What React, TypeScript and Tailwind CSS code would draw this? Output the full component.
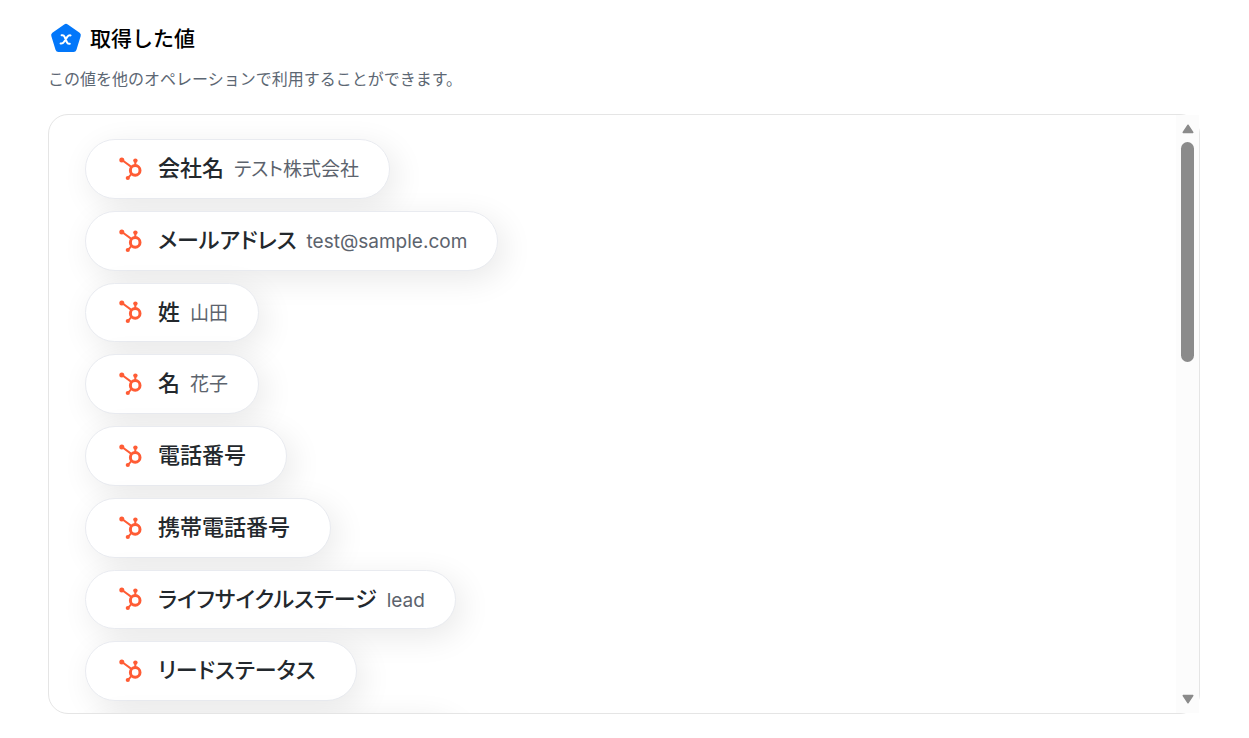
type Field = {
    label: string;
    value: string;
};

const fields: Field[] = [
    { label: "会社名", value: "テスト株式会社" },
    { label: "メールアドレス", value: "test@sample.com" },
    { label: "姓", value: "山田" },
    { label: "名", value: "花子" },
    { label: "電話番号", value: "" },
    { label: "携帯電話番号", value: "" },
    { label: "ライフサイクルステージ", value: "lead" },
    { label: "リードステータス", value: "" },
];

const ValueIcon = () => (
    <svg viewBox="0 1 32 32" className="size-8 shrink-0" aria-hidden="true">
        <path
            d="M14.2 2.5a3 3 0 0 1 3.6 0l11.8 8.3a3 3 0 0 1 1.1 3.3l-4.3 13.8a3 3 0 0 1-2.9 2.1h-15a3 3 0 0 1-2.9-2.1L1.3 14.1a3 3 0 0 1 1.1-3.3z"
            fill="#0277fa"
        />
        <path
            d="M11.6 13.2h.9c1 0 1.6.5 2.1 1.6l2.2 5.2c.5 1.2 1.1 1.8 2.1 1.8h.9M20.6 13.4c-1.6-.3-2.6.5-3.5 1.7l-3 4.6c-.9 1.4-1.9 2.2-3.5 1.8"
            fill="none"
            stroke="#fff"
            strokeWidth="2"
            strokeLinecap="round"
        />
    </svg>
);

const HubSpotIcon = () => (
    <svg viewBox="0 0 24 24" className="size-6 shrink-0" aria-hidden="true">
        <g fill="none" stroke="#ff5c35">
            <path d="M4 3l10 7.4M17.3 4v5M13.6 16.8l-3.6 4" strokeWidth="2" />
            <circle cx="17.2" cy="13.4" r="4.8" strokeWidth="3" />
        </g>
        <g fill="#ff5c35">
            <circle cx="3.8" cy="3" r="2.5" />
            <circle cx="17.4" cy="3.6" r="2.2" />
            <circle cx="9.8" cy="21" r="2.1" />
        </g>
    </svg>
);

const FieldChip = ({ label, value }: Field) => (
    <li className="flex items-center gap-4 rounded-full border border-[#e9ebf0] bg-white py-[11px] pr-[30px] pl-8 shadow-[6px_8px_32px_rgba(0,0,0,0.09)]">
        <HubSpotIcon />
        <div className="flex items-baseline gap-[10px]">
            <span className="text-[22px] leading-relaxed font-medium text-[#23282d]">{label}</span>
            <span className="text-[19px] leading-6 text-[#5c636d]">{value}</span>
        </div>
    </li>
);

const ScrollBar = () => (
    <div className="flex w-[23px] shrink-0 flex-col items-center bg-[#fcfcfc] py-[9px]" aria-hidden="true">
        <svg viewBox="0 0 12 10" className="h-[10px] w-3">
            <path d="M6 1.2L10.8 8.5H1.2z" fill="#8b8b8b" stroke="#8b8b8b" strokeWidth="1.4" strokeLinejoin="round" />
        </svg>
        <div className="mt-2 h-[220px] w-[13px] rounded-full bg-[#8b8b8b]" />
        <svg viewBox="0 0 12 10" className="mt-auto h-[10px] w-3">
            <path d="M6 8.8L1.2 1.5h9.6z" fill="#8b8b8b" stroke="#8b8b8b" strokeWidth="1.4" strokeLinejoin="round" />
        </svg>
    </div>
);

const App = () => {
    return (
        <main className="bg-white pt-[23px] pr-[49px] pb-6 pl-12 font-['Inter','Noto_Sans_CJK_JP',sans-serif]" lang="ja">
            <h1 className="flex items-center gap-2 pl-[2px] text-[21px] leading-8 font-medium text-black">
                <ValueIcon />
                取得した値
            </h1>
            <p className="mt-3 text-base leading-6 text-[#5c6773]">この値を他のオペレーションで利用することができます。</p>

            <section className="mt-[23px] flex h-[600px] rounded-[20px] border border-[#e5e5e5]">
                <ul className="flex min-w-0 flex-1 flex-col items-start gap-3 overflow-hidden rounded-l-[19px] py-6 pl-9 [font-feature-settings:'palt']">
                    {fields.map((field) => (
                        <FieldChip key={field.label} {...field} />
                    ))}
                    <li className="h-15 w-[370px] shrink-0 rounded-full border border-[#e9ebf0] bg-white shadow-[6px_8px_32px_rgba(0,0,0,0.09)]" aria-hidden="true" />
                </ul>
                <ScrollBar />
            </section>
        </main>
    );
};

export default App;
